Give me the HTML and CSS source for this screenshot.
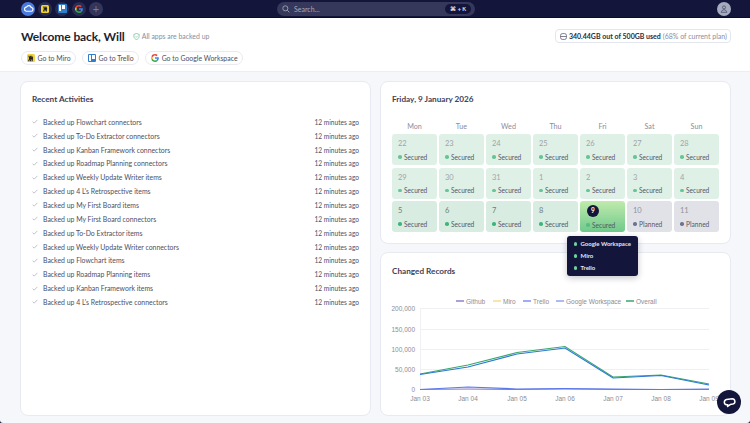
FILE: index.html
```html
<!DOCTYPE html>
<html lang="en">
<head>
<meta charset="utf-8">
<title>Dashboard</title>
<link rel="stylesheet" href="styles.css">
</head>
<body>
<svg class="defs" width="0" height="0"><defs>
  <symbol id="check" viewBox="0 0 8 6"><path d="M.8 3.2 2.9 5.200 7.200 .8" fill="none" stroke="#8a8d9f" stroke-width=".7"/></symbol>
  <symbol id="google" viewBox="0 0 48 48"><path fill="#EA4335" d="M24 9.500c3.500 0 6.700 1.200 9.200 3.600l6.900-6.900C35.900 2.400 30.500 0 24 0 14.600 0 6.500 5.400 2.600 13.200l8 6.200C12.500 13.700 17.800 9.500 24 9.500z"/><path fill="#4285F4" d="M47 24.500c0-1.600-.1-3.100-.4-4.500H24v9h13c-.6 3-2.300 5.500-4.800 7.200l7.700 6C44.400 37.900 47 31.800 47 24.500z"/><path fill="#FBBC05" d="M10.600 28.600a14.500 14.500 0 0 1 0-9.200l-8-6.200a24 24 0 0 0 0 21.600z"/><path fill="#34A853" d="M24 48c6.500 0 11.900-2.100 15.900-5.800l-7.700-6c-2.200 1.500-4.900 2.300-8.200 2.300-6.200 0-11.500-4.200-13.400-9.900l-8 6.200C6.500 42.600 14.600 48 24 48z"/></symbol>
  <symbol id="miro" viewBox="0 0 10 10"><path d="M7.200 1 6 1l1 3.200L5.200 1H4l1 3L3 1H2l1 4-1.500 4h1.400L5 5 4 9h1.300L7 5l-.4 4H8l.6-5z" fill="#1c1c24"/></symbol>
</defs></svg>
<div class="page">
  <nav class="topbar">
    <div class="apps">
      <span class="app app-main"><svg viewBox="0 0 14 14" width="11" height="11"><path d="M4 10.500h6.200a2.400 2.400 0 0 0 .3-4.800A3.200 3.200 0 0 0 4.600 5 2.800 2.800 0 0 0 4 10.500z" fill="none" stroke="#fff" stroke-width="1.500"/></svg></span>
      <span class="app"><span class="miro-tile"><svg width="6" height="6"><use href="#miro"/></svg></span></span>
      <span class="app"><span class="trello-tile top"><i class="bar-a"></i><i class="bar-b"></i></span></span>
      <span class="app"><svg width="8" height="8"><use href="#google"/></svg></span>
      <span class="app app-add">+</span>
    </div>
    <div class="search">
      <svg viewBox="0 0 12 12" width="8" height="8"><circle cx="5" cy="5" r="3.800" fill="none" stroke="#aeb1c4" stroke-width="1.200"/><path d="M8 8l3 3" stroke="#aeb1c4" stroke-width="1.200"/></svg>
      <span class="search-text">Search...</span>
      <span class="kbd">⌘ + K</span>
    </div>
    <span class="avatar"><svg viewBox="0 0 12 12" width="8" height="8"><circle cx="6" cy="3.600" r="2.300" fill="none" stroke="#3c3f58" stroke-width="1"/><path d="M1.800 11c.5-2.600 2.200-3.800 4.200-3.800s3.700 1.200 4.200 3.800z" fill="none" stroke="#3c3f58" stroke-width="1"/></svg></span>
  </nav>

  <header class="header">
    <div class="header-top">
      <h1 class="welcome">Welcome back, Will</h1>
      <span class="backed"><svg viewBox="0 0 12 12" width="7" height="7"><path d="M6 .8l4.500 1.600v3.400c0 2.700-2 4.500-4.500 5.400-2.500-.9-4.500-2.700-4.500-5.400V2.400z" fill="none" stroke="#5fbf8f" stroke-width="1.200"/><path d="M4 6l1.500 1.500L8 4.800" fill="none" stroke="#5fbf8f" stroke-width="1"/></svg>All apps are backed up</span>
      <span class="usage"><svg viewBox="0 0 12 12" width="7" height="7"><rect x="1" y="1" width="10" height="10" rx="3" fill="none" stroke="#4b4e63" stroke-width="1.200"/><path d="M1 6h10" stroke="#4b4e63" stroke-width="1.200"/></svg><b>340.44GB out of 500GB used</b> <span class="usage-note">(68% of current plan)</span></span>
    </div>
    <div class="links">
      <a class="link"><span class="miro-tile small"><svg width="7" height="7"><use href="#miro"/></svg></span>Go to Miro</a>
      <a class="link"><span class="trello-tile small"><i class="bar-a"></i><i class="bar-b"></i></span>Go to Trello</a>
      <a class="link"><svg width="8" height="8"><use href="#google"/></svg>Go to Google Workspace</a>
    </div>
  </header>

  <main class="content">
    <section class="card activities">
      <h2 class="card-title">Recent Activities</h2>
      <ul class="activity-list">
        <li class="activity"><svg class="tick"><use href="#check"/></svg><span class="activity-name">Backed up Flowchart connectors</span><span class="ago">12 minutes ago</span></li>
        <li class="activity"><svg class="tick"><use href="#check"/></svg><span class="activity-name">Backed up To-Do Extractor connectors</span><span class="ago">12 minutes ago</span></li>
        <li class="activity"><svg class="tick"><use href="#check"/></svg><span class="activity-name">Backed up Kanban Framework connectors</span><span class="ago">12 minutes ago</span></li>
        <li class="activity"><svg class="tick"><use href="#check"/></svg><span class="activity-name">Backed up Roadmap Planning connectors</span><span class="ago">12 minutes ago</span></li>
        <li class="activity"><svg class="tick"><use href="#check"/></svg><span class="activity-name">Backed up Weekly Update Writer items</span><span class="ago">12 minutes ago</span></li>
        <li class="activity"><svg class="tick"><use href="#check"/></svg><span class="activity-name">Backed up 4 L's Retrospective items</span><span class="ago">12 minutes ago</span></li>
        <li class="activity"><svg class="tick"><use href="#check"/></svg><span class="activity-name">Backed up My First Board items</span><span class="ago">12 minutes ago</span></li>
        <li class="activity"><svg class="tick"><use href="#check"/></svg><span class="activity-name">Backed up My First Board connectors</span><span class="ago">12 minutes ago</span></li>
        <li class="activity"><svg class="tick"><use href="#check"/></svg><span class="activity-name">Backed up To-Do Extractor items</span><span class="ago">12 minutes ago</span></li>
        <li class="activity"><svg class="tick"><use href="#check"/></svg><span class="activity-name">Backed up Weekly Update Writer connectors</span><span class="ago">12 minutes ago</span></li>
        <li class="activity"><svg class="tick"><use href="#check"/></svg><span class="activity-name">Backed up Flowchart items</span><span class="ago">12 minutes ago</span></li>
        <li class="activity"><svg class="tick"><use href="#check"/></svg><span class="activity-name">Backed up Roadmap Planning items</span><span class="ago">12 minutes ago</span></li>
        <li class="activity"><svg class="tick"><use href="#check"/></svg><span class="activity-name">Backed up Kanban Framework items</span><span class="ago">12 minutes ago</span></li>
        <li class="activity"><svg class="tick"><use href="#check"/></svg><span class="activity-name">Backed up 4 L's Retrospective connectors</span><span class="ago">12 minutes ago</span></li>
      </ul>
    </section>

    <div class="right-col">
      <section class="card calendar">
        <h2 class="card-title">Friday, 9 January 2026</h2>
        <div class="cal-grid">
          <span class="dow">Mon</span><span class="dow">Tue</span><span class="dow">Wed</span><span class="dow">Thu</span><span class="dow">Fri</span><span class="dow">Sat</span><span class="dow">Sun</span>
          <div class="day past"><span class="num">22</span><span class="state">Secured</span></div>
          <div class="day past"><span class="num">23</span><span class="state">Secured</span></div>
          <div class="day past"><span class="num">24</span><span class="state">Secured</span></div>
          <div class="day past"><span class="num">25</span><span class="state">Secured</span></div>
          <div class="day past"><span class="num">26</span><span class="state">Secured</span></div>
          <div class="day past"><span class="num">27</span><span class="state">Secured</span></div>
          <div class="day past"><span class="num">28</span><span class="state">Secured</span></div>
          <div class="day past"><span class="num">29</span><span class="state">Secured</span></div>
          <div class="day past"><span class="num">30</span><span class="state">Secured</span></div>
          <div class="day past"><span class="num">31</span><span class="state">Secured</span></div>
          <div class="day past"><span class="num">1</span><span class="state">Secured</span></div>
          <div class="day past"><span class="num">2</span><span class="state">Secured</span></div>
          <div class="day past"><span class="num">3</span><span class="state">Secured</span></div>
          <div class="day past"><span class="num">4</span><span class="state">Secured</span></div>
          <div class="day recent"><span class="num">5</span><span class="state">Secured</span></div>
          <div class="day recent"><span class="num">6</span><span class="state">Secured</span></div>
          <div class="day recent"><span class="num">7</span><span class="state">Secured</span></div>
          <div class="day recent"><span class="num">8</span><span class="state">Secured</span></div>
          <div class="day today"><span class="num">9</span><span class="state">Secured</span>
            <div class="tooltip">
              <span class="tip-row">Google Workspace</span>
              <span class="tip-row">Miro</span>
              <span class="tip-row">Trello</span>
            </div>
          </div>
          <div class="day planned"><span class="num">10</span><span class="state">Planned</span></div>
          <div class="day planned"><span class="num">11</span><span class="state">Planned</span></div>
        </div>
      </section>

      <section class="card records">
        <h2 class="card-title">Changed Records</h2>
        <svg class="chart" viewBox="0 0 351 120" width="351" height="120">
          <g class="grid-lines">
            <path d="M40 10.500H329M40 31.500H329M40 51.500H329M40 71.500H329M40 91.500H329"/>
            <path d="M40.500 10V92"/>
          </g>
          <g class="axis-text" text-anchor="end">
            <text x="35" y="13">200,000</text>
            <text x="35" y="33.500">150,000</text>
            <text x="35" y="53.500">100,000</text>
            <text x="35" y="73.500">50,000</text>
            <text x="35" y="93.500">0</text>
          </g>
          <g class="axis-text" text-anchor="middle">
            <text x="40" y="102.500">Jan 03</text>
            <text x="88" y="102.500">Jan 04</text>
            <text x="137" y="102.500">Jan 05</text>
            <text x="185" y="102.500">Jan 06</text>
            <text x="233" y="102.500">Jan 07</text>
            <text x="281" y="102.500">Jan 08</text>
            <text x="329" y="102.500">Jan 09</text>
          </g>
          <g class="axis-text">
            <path d="M76 3H84" stroke="#8d7fd0" stroke-width="1.500"/><text x="86" y="5.500">Github</text>
            <path d="M113 3H121" stroke="#f5dc90" stroke-width="1.500"/><text x="123" y="5.500">Miro</text>
            <path d="M143 3H151" stroke="#7d95ec" stroke-width="1.500"/><text x="153" y="5.500">Trello</text>
            <path d="M176 3H184" stroke="#8ea6ec" stroke-width="1.500"/><text x="186" y="5.500">Google Workspace</text>
            <path d="M246 3H254" stroke="#3aa76d" stroke-width="1.500"/><text x="256" y="5.500">Overall</text>
          </g>
          <path class="line" stroke="#8d7fd0" d="M40 91.500L88 91 137 91.500 185 91 233 91.500 281 91.500 329 91.500"/>
          <path class="line" stroke="#5b78ea" d="M40 91.500L88 89 137 91 185 90.500 233 91 281 91.500 329 91"/>
          <path class="line" stroke="#3aa76d" d="M40 76L88 67 137 54.500 185 48.500 233 79 281 77 329 86"/>
          <path class="line" stroke="#2b78d6" d="M40 76.500L88 69 137 56 185 50 233 80 281 77.500 329 87"/>
        </svg>
      </section>
    </div>
  </main>

  <button class="fab" aria-label="Chat"><svg viewBox="0 0 16 16" width="15" height="15"><path d="M4.800 4.800l6-.8a2.900 2.900 0 0 1 .8 5.700l-2.900.5-2.700 2 .1-1.900-1.200.2a2.900 2.900 0 0 1-.1-5.700z" fill="none" stroke="#fff" stroke-width="1.600" stroke-linejoin="round"/></svg></button>
</div>
</body>
</html>
```

FILE: styles.css
```css
* { box-sizing: border-box; }
html, body { margin: 0; padding: 0; }
body { font-family: "Lato", "Liberation Sans", sans-serif; color: #2a2c40; background: #13153a; }
.defs { position: absolute; }
.page { position: relative; width: 750px; height: 423px; overflow: hidden; background: #f6f7fb; border-radius: 0 0 3px 3px; }

.topbar { height: 18px; background: #13153a; display: flex; align-items: center; padding: 0 21px; position: relative; border-bottom: 1px solid #0b0c24; }
.apps { display: flex; gap: 3px; }
.app { width: 14px; height: 14px; border-radius: 50%; background: #2a2d52; display: flex; align-items: center; justify-content: center; }
.app-main { background: #4a7bdc; }
.app-add { color: #7a7d9c; font-size: 11px; background: #33365a; line-height: 14px; }
.miro-tile { width: 8px; height: 8px; border-radius: 1.5px; background: #f0d23c; display: flex; align-items: center; justify-content: center; flex: none; }
.trello-tile { width: 8px; height: 8px; border-radius: 1px; background: #2f7fd0; display: flex; gap: 1px; padding: 1px; flex: none; }
.trello-tile.top { width: 9px; height: 9px; }
.trello-tile i { display: block; width: 2.5px; background: #fff; }
.bar-a { height: 6px; }
.bar-b { height: 4px; }
.search { position: absolute; left: 277px; top: 2px; width: 198px; height: 14px; border-radius: 8px; background: #35385a; display: flex; align-items: center; padding: 0 4px 0 5px; gap: 4px; }
.search-text { font-size: 7px; color: #a3a6bb; flex: 1; }
.kbd { font-size: 5.5px; font-weight: 700; color: #e3e4ee; background: #13153a; border-radius: 5px; padding: 1px 5px; line-height: 8px; }
.avatar { margin-left: auto; margin-right: -2px; width: 14px; height: 14px; border-radius: 50%; background: #a6abc0; display: flex; align-items: center; justify-content: center; }

.header { height: 54px; background: #fff; border-bottom: 1px solid #eceef4; padding: 11px 19px 0 21px; }
.header-top { display: flex; align-items: center; height: 14px; }
.welcome { margin: 0; font-size: 12px; font-weight: 700; color: #1c1e33; letter-spacing: -.1px; }
.backed { margin-left: 8px; font-size: 6.9px; color: #8a8d9f; display: flex; align-items: center; gap: 2px; }
.usage { margin-left: auto; height: 14px; border: 1px solid #e4e6ee; border-radius: 4px; padding: 0 3px 0 4px; display: flex; align-items: center; gap: 2px; font-size: 7px; color: #2a2c40; white-space: pre; }
.usage-note { color: #8a8d9f; }
.links { display: flex; gap: 6px; margin-top: 8px; }
.link { height: 14px; border: 1px solid #e8eaf0; border-radius: 7px; padding: 0 4.5px; display: flex; align-items: center; gap: 3px; font-size: 6.9px; color: #4d4f63; }

.content { display: flex; gap: 9px; padding: 9px 19px 0 20px; }
.card { background: #fff; border: 1px solid #e8eaf1; border-radius: 8px; }
.card-title { margin: 0; font-size: 8.2px; font-weight: 700; color: #3f4156; line-height: 12px; }
.activities { width: 351px; height: 335px; padding: 11px 11px 0 11px; }
.activity-list { list-style: none; margin: 10px 0 0; padding: 0; }
.activity { display: flex; align-items: center; height: 13.85px; font-size: 6.9px; color: #4d4f63; }
.tick { width: 6px; height: 5px; margin-right: 5px; flex: none; }
.activity-name { flex: 1; }
.ago { color: #4d4f63; font-size: 6.6px; }

.right-col { width: 351px; display: flex; flex-direction: column; gap: 8px; }
.calendar { height: 163px; padding: 11px 11px 0; }
.cal-grid { display: grid; grid-template-columns: repeat(7, 45px); grid-template-rows: 10px repeat(3, 31px); gap: 2.5px 2px; margin-top: 16.5px; }
.dow { font-size: 7.2px; color: #8a8d9f; text-align: center; line-height: 10px; }
.day { border-radius: 3px; padding: 5px 6px 3.5px; display: flex; flex-direction: column; justify-content: space-between; position: relative; }
.num { font-size: 7.5px; line-height: 10px; color: #9fa3a8; }
.state { font-size: 6.6px; line-height: 9px; color: #55586a; display: flex; align-items: center; gap: 2.5px; }
.state::before { content: ""; width: 3.5px; height: 3.5px; border-radius: 50%; background: #66c596; flex: none; }
.past { background: #dff1e7; }
.recent { background: #d8ece1; }
.recent .num { color: #6f7f7a; }
.recent .state::before { background: #3fb57c; }
.today { background: linear-gradient(#c0ebac, #6fc98c); padding-top: 4px; padding-bottom: 2.5px; }
.today .num { width: 12px; height: 12px; line-height: 12px; border-radius: 50%; background: #13153a; color: #fff; font-size: 6.5px; font-weight: 700; text-align: center; margin-left: 1px; }
.today .state::before { background: #57bd82; }
.planned { background: #e1e2e7; }
.planned .num { color: #8f919c; }
.planned .state::before { background: #6f7390; }
.tooltip { position: absolute; left: -13px; top: 35px; width: 71px; height: 40px; background: #13153a; border-radius: 3px; box-shadow: 0 2px 6px rgba(20, 22, 50, .25); padding: 2px 6.5px; display: flex; flex-direction: column; justify-content: center; z-index: 3; }
.tip-row { font-size: 6px; font-weight: 700; color: #e4e5ee; line-height: 12px; display: flex; align-items: center; gap: 3.5px; white-space: nowrap; }
.tip-row::before { content: ""; width: 3.5px; height: 3.5px; border-radius: 50%; background: #6dd19c; flex: none; }

.records { height: 164px; padding: 12px 0 0 0; }
.records .card-title { padding-left: 11px; }
.chart { display: block; margin-top: 21px; margin-left: -1px; overflow: visible; }
.grid-lines path { stroke: #eef0f3; stroke-width: 1; fill: none; }
.axis-text { font-family: "Liberation Sans", sans-serif; font-size: 6.5px; fill: #8b8d95; }
.line { fill: none; stroke-width: 1.2; }

.fab { position: absolute; right: 9px; bottom: 9px; width: 24px; height: 24px; border-radius: 50%; background: #13153a; border: 0; padding: 0; display: flex; align-items: center; justify-content: center; }
```
